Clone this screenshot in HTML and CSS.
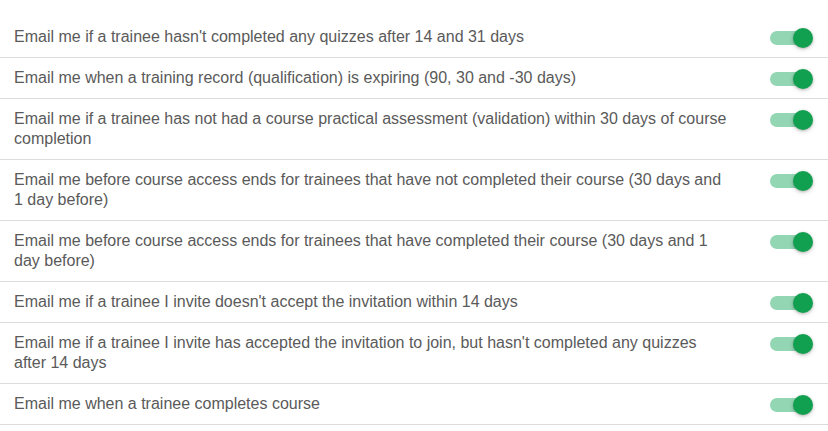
FILE: index.html
```html
<!DOCTYPE html>
<html lang="en">
<head>
<meta charset="utf-8">
<title>Email notifications</title>
<link rel="stylesheet" href="styles.css">
</head>
<body>
<ul class="settings">
  <li class="row"><span class="label">Email me if a trainee hasn't completed any quizzes after 14 and 31 days</span><span class="switch"><span class="track"></span><span class="thumb"></span></span></li>
  <li class="row"><span class="label">Email me when a training record (qualification) is expiring (90, 30 and -30 days)</span><span class="switch"><span class="track"></span><span class="thumb"></span></span></li>
  <li class="row"><span class="label">Email me if a trainee has not had a course practical assessment (validation) within 30 days of course completion</span><span class="switch"><span class="track"></span><span class="thumb"></span></span></li>
  <li class="row"><span class="label">Email me before course access ends for trainees that have not completed their course (30 days and 1 day before)</span><span class="switch"><span class="track"></span><span class="thumb"></span></span></li>
  <li class="row"><span class="label">Email me before course access ends for trainees that have completed their course (30 days and 1 day before)</span><span class="switch"><span class="track"></span><span class="thumb"></span></span></li>
  <li class="row"><span class="label">Email me if a trainee I invite doesn't accept the invitation within 14 days</span><span class="switch"><span class="track"></span><span class="thumb"></span></span></li>
  <li class="row"><span class="label">Email me if a trainee I invite has accepted the invitation to join, but hasn't completed any quizzes after 14 days</span><span class="switch"><span class="track"></span><span class="thumb"></span></span></li>
  <li class="row"><span class="label">Email me when a trainee completes course</span><span class="switch"><span class="track"></span><span class="thumb"></span></span></li>
</ul>
</body>
</html>
```

FILE: styles.css
```css
html, body {
  margin: 0;
  padding: 0;
  background: #ffffff;
}

.settings {
  list-style: none;
  margin: 0;
  padding: 17px 0 0 0;
  font-family: "Liberation Sans", Arial, sans-serif;
  font-size: 16px;
  line-height: 20px;
  color: #5a5a5a;
}

.row {
  display: flex;
  align-items: flex-start;
  padding: 10px 15px 10px 14px;
  border-bottom: 1px solid #dcdcdc;
}

.label {
  flex: 0 0 714px;
}

.switch {
  position: relative;
  margin-left: auto;
  margin-top: 1px;
  margin-bottom: -1px;
  width: 43px;
  height: 20px;
  flex: 0 0 auto;
}

.track {
  position: absolute;
  left: 0;
  top: 3px;
  width: 38px;
  height: 14px;
  border-radius: 7px;
  background: #92d6b3;
}

.thumb {
  position: absolute;
  right: 0;
  top: 0;
  width: 20px;
  height: 20px;
  border-radius: 50%;
  background: #10a04f;
  box-shadow: 0 1px 3px rgba(0, 0, 0, 0.25), 0 2px 6px rgba(0, 0, 0, 0.08);
}
```
